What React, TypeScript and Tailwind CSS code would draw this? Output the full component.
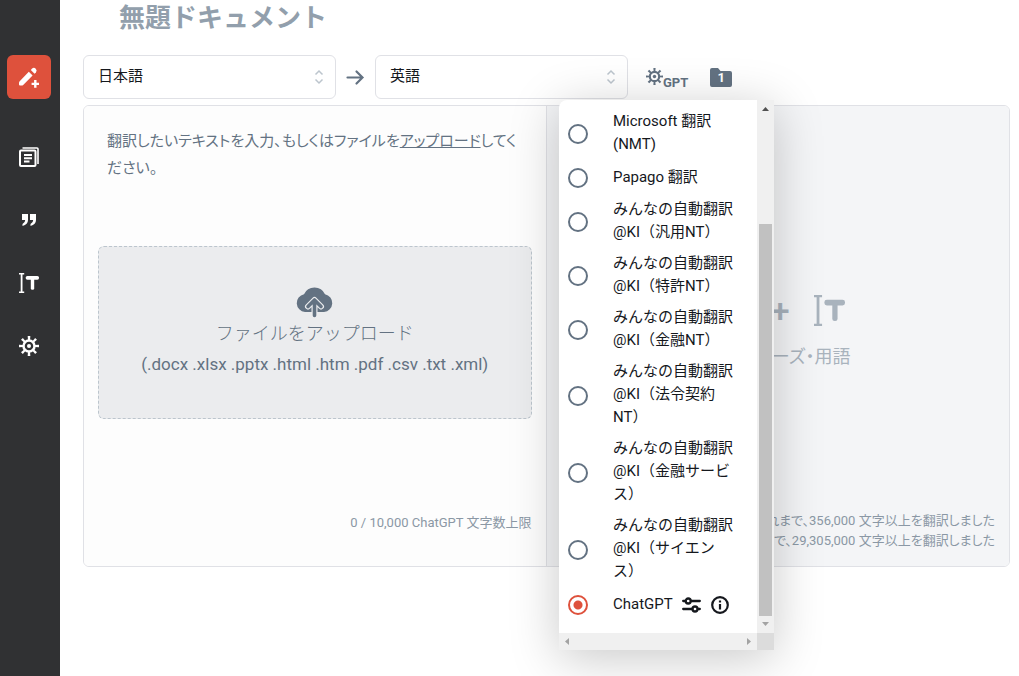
import React, { useState } from 'react';

const engines = [
  { id: 'microsoft', label: 'Microsoft 翻訳\n(NMT)' },
  { id: 'papago', label: 'Papago 翻訳' },
  { id: 'ki-general', label: 'みんなの自動翻訳\n@KI（汎用NT）' },
  { id: 'ki-patent', label: 'みんなの自動翻訳\n@KI（特許NT）' },
  { id: 'ki-finance', label: 'みんなの自動翻訳\n@KI（金融NT）' },
  { id: 'ki-law', label: 'みんなの自動翻訳\n@KI（法令契約\nNT）' },
  { id: 'ki-finance-service', label: 'みんなの自動翻訳\n@KI（金融サービ\nス）' },
  { id: 'ki-science', label: 'みんなの自動翻訳\n@KI（サイエン\nス）' },
  { id: 'chatgpt', label: 'ChatGPT' },
];

type IconProps = { className?: string };

function PenPlusIcon({ className }: IconProps) {
  return (
    <svg className={className} viewBox="0 0 20 20" fill="currentColor" aria-hidden="true">
      <path d="M9.800 4.800 13.600 8.600 4.200 18Q3.500 18.600 2.600 18.600H1Q0 18.600 0 17.600V16Q0 15 .7 14.300Z" />
      <path d="M11.800 3 12.900 1.700Q14.900 0 16.700 1.700 18.500 3.600 16.900 5.400L15.600 6.700Z" />
      <path d="M15.100 13h2.400v2.700H20v2.400h-2.500v2.700h-2.400v-2.700h-2.500v-2.400h2.500z" />
    </svg>
  );
}

function DocsIcon({ className }: IconProps) {
  return (
    <svg className={className} viewBox="0 0 20 20" fill="none" stroke="currentColor" strokeWidth="2" aria-hidden="true">
      <rect x="1" y="3.5" width="15.5" height="15.5" rx="1" />
      <path d="M3.5 1H18q1 0 1 1v15" strokeWidth="1.6" />
      <path d="M5 8h8M5 11.2h8M5 14.4h5.5" />
    </svg>
  );
}

function QuoteIcon({ className }: IconProps) {
  return (
    <svg className={className} viewBox="0 0 20 20" fill="currentColor" aria-hidden="true">
      <path d="M3 4h6v6q0 4.500-5.500 6v-2q2.700-1.200 2.700-4H3z" />
      <path d="M11 4h6v6q0 4.500-5.500 6v-2q2.700-1.200 2.700-4H11z" />
    </svg>
  );
}

function TermIcon({ className }: IconProps) {
  return (
    <svg className={className} viewBox="0 0 20 20" fill="currentColor" aria-hidden="true">
      <path d="M0 0h5.200v1.500H3.500v17h1.700V20H0v-1.500h1.700v-17H0z" />
      <rect x="6.700" y="3" width="13.300" height="3.700" rx="1.600" />
      <rect x="11.800" y="4" width="3.400" height="12.800" rx="1.500" />
    </svg>
  );
}

function GearIcon({ className }: IconProps) {
  const angles = [0, 45, 90, 135, 180, 225, 270, 315];
  return (
    <svg className={className} viewBox="0 0 20 20" fill="currentColor" aria-hidden="true">
      <circle cx="10" cy="10" r="5.500" fill="none" stroke="currentColor" strokeWidth="2.500" />
      <circle cx="10" cy="10" r="2" />
      {angles.map((a) => (
        <path key={a} d="M9 4.500 8.700 0h2.600L11 4.500z" transform={`rotate(${a} 10 10)`} />
      ))}
    </svg>
  );
}

function CloudIcon({ className }: IconProps) {
  return (
    <svg className={className} viewBox="0 0 37 32" aria-hidden="true">
      <path
        d="M9 26A9 9 0 0 1 8 8.200 11.500 11.500 0 0 1 29 8.200 9 9 0 0 1 28 26z"
        fill="#637282"
      />
      <path d="M18.500 29V15M12 20.500l6.500-6.500 6.500 6.500" fill="none" stroke="#ebecee" strokeWidth="6" strokeLinecap="round" strokeLinejoin="round" />
      <path d="M18.500 29.500V15M12 20.500l6.500-6.500 6.500 6.500" fill="none" stroke="#637282" strokeWidth="3.600" strokeLinecap="round" strokeLinejoin="round" />
    </svg>
  );
}

function LanguageSelect({ label, value }: { label: string; value: string }) {
  return (
    <div className="relative w-[253px]">
      <select
        aria-label={label}
        defaultValue={value}
        className="h-11 w-full appearance-none rounded-md border border-[#e0e1e6] bg-white px-[14px] pb-[2px] text-[15px] text-[#15181d] outline-none"
      >
        <option>日本語</option>
        <option>英語</option>
      </select>
      <svg className="pointer-events-none absolute right-3 top-[14px] h-4 w-[10px]" viewBox="0 0 10 16" fill="none" stroke="#bcc5cd" strokeWidth="1.500" aria-hidden="true">
        <path d="M1.500 5.500 5 2l3.500 3.500M1.500 10.500 5 14l3.500-3.500" />
      </svg>
    </div>
  );
}

function Sidebar() {
  const button = 'flex h-11 w-11 items-center justify-center rounded-md';
  return (
    <nav className="flex w-[60px] shrink-0 flex-col items-center gap-[19px] bg-[#303133] pr-[2px] pt-[55px] text-white">
      <button className={`${button} mb-[17px] bg-[#de513c]`} aria-label="新規翻訳">
        <PenPlusIcon className="h-5 w-5 overflow-visible" />
      </button>
      <button className={button} aria-label="ドキュメント">
        <DocsIcon className="h-5 w-5" />
      </button>
      <button className={button} aria-label="フレーズ">
        <QuoteIcon className="h-5 w-5" />
      </button>
      <button className={button} aria-label="用語">
        <TermIcon className="h-5 w-5" />
      </button>
      <button className={button} aria-label="設定">
        <GearIcon className="h-5 w-5" />
      </button>
    </nav>
  );
}

function EngineMenu() {
  const [selected, setSelected] = useState('chatgpt');

  return (
    <div className="absolute -left-[87px] top-[45px] z-10 grid w-[215px] grid-cols-[1fr_17px] overflow-hidden rounded-tl-lg bg-white shadow-[0_8px_50px_rgba(0,0,0,0.22)]">
      <div className="h-[533px] overflow-hidden pt-[6px]">
        {engines.map((engine) => (
          <div key={engine.id} className="flex min-h-[34px] items-center gap-[25px] py-1 pl-[9px]">
            <input
              type="radio"
              name="engine"
              id={engine.id}
              checked={selected === engine.id}
              onChange={() => setSelected(engine.id)}
              className="mt-[2px] h-5 w-5 shrink-0 appearance-none rounded-full border-2 border-[#637282] bg-white checked:border-[#de513c] checked:bg-[radial-gradient(circle,#de513c_4px,transparent_5px)]"
            />
            <label htmlFor={engine.id} className="whitespace-pre text-[15px] leading-[23px] text-[#15181d]">
              {engine.label}
            </label>
            {engine.id === 'chatgpt' && (
              <span className="-ml-4 mt-[2px] flex gap-[10px] text-[#15181d]">
                <button aria-label="詳細設定">
                  <svg className="h-[18px] w-[19px]" viewBox="0 0 19 18" fill="none" stroke="currentColor" strokeWidth="2.300" strokeLinecap="round" aria-hidden="true">
                    <path d="M1.200 5h2.300M9 5h8.800M1.200 13h9M16 13h1.800" />
                    <circle cx="6.200" cy="5" r="2.500" />
                    <circle cx="13" cy="13" r="2.500" />
                  </svg>
                </button>
                <button aria-label="情報">
                  <svg className="h-[18px] w-[18px]" viewBox="0 0 18 18" fill="none" stroke="currentColor" strokeWidth="2.200" aria-hidden="true">
                    <circle cx="9" cy="9" r="7.800" />
                    <path d="M9 8v5.500M9 4.500v2" />
                  </svg>
                </button>
              </span>
            )}
          </div>
        ))}
      </div>

      {/* scroll bars */}
      <div className="flex flex-col items-center bg-[#f0f0f0]" aria-hidden="true">
        <svg className="h-[17px] w-[17px]" viewBox="0 0 17 17" fill="#505050">
          <path d="M5 11h7L8.500 7z" />
        </svg>
        <div className="mt-auto h-[392px] w-[13px] bg-[#c1c1c1]" />
        <svg className="h-[17px] w-[17px]" viewBox="0 0 17 17" fill="#a3a3a3">
          <path d="M5 6h7l-3.500 4z" />
        </svg>
      </div>
      <div className="flex h-[17px] justify-between bg-[#f0f0f0]" aria-hidden="true">
        <svg className="h-[17px] w-[17px]" viewBox="0 0 17 17" fill="#a3a3a3">
          <path d="M10 5v7L6 8.500z" />
        </svg>
        <svg className="h-[17px] w-[17px]" viewBox="0 0 17 17" fill="#a3a3a3">
          <path d="M7 5v7l4-3.500z" />
        </svg>
      </div>
      <div className="bg-[#dcdcdc]" />
    </div>
  );
}

export default function App() {
  return (
    <div className="flex min-h-screen bg-white font-['Roboto','Noto_Sans_CJK_JP',sans-serif]">
      <Sidebar />

      <main className="flex min-w-0 flex-1 flex-col pl-[23px] pr-[9px]">
        <h1 className="h-[55px] pl-9 text-[26px] font-bold leading-9 text-[#929fac]">無題ドキュメント</h1>

        <div className="flex items-center">
          <LanguageSelect label="翻訳元の言語" value="日本語" />
          <svg className="mx-[10px] h-[19px] w-[19px]" viewBox="0 0 19 19" fill="none" stroke="#637282" strokeWidth="2.200" strokeLinecap="round" aria-hidden="true">
            <path d="M1.500 9.500h15M10.500 3.500l6 6-6 6" />
          </svg>
          <LanguageSelect label="翻訳先の言語" value="英語" />

          <div className="relative ml-[18px] h-11">
            <button className="flex h-11 items-center text-[#637282]" aria-label="翻訳エンジン GPT">
              <GearIcon className="mb-[2px] h-[17px] w-[17px]" />
              <span className="pt-[11px] text-[13px] font-bold">GPT</span>
            </button>
            <EngineMenu />
          </div>

          <button className="ml-[22px] grid place-items-center text-white" aria-label="フォルダー 1">
            <svg className="col-start-1 row-start-1 h-[19px] w-[22px]" viewBox="0 0 22 19" fill="#637282" aria-hidden="true">
              <path d="M2 0h6l2.500 3H20q2 0 2 2v12q0 2-2 2H2q-2 0-2-2V2q0-2 2-2z" />
            </svg>
            <span className="col-start-1 row-start-1 pt-[2px] text-[13px] font-bold">1</span>
          </button>
        </div>

        <div className="mt-[6px] grid grid-cols-2 overflow-hidden rounded-md border border-[#e0e1e6]">
          <section className="flex min-h-[460px] flex-col border-r border-[#e0e1e6] bg-[#fdfdfd] px-[14px] pt-[22px]">
            <label htmlFor="source" className="block pl-[9px] text-[15px] leading-[27px] text-[#637282] [font-feature-settings:'palt']">
              翻訳したいテキストを入力、もしくはファイルを<a href="#upload" className="underline">アップロード</a>してく
              <br />
              ださい。
            </label>
            <textarea id="source" className="h-16 resize-none bg-transparent px-[9px] outline-none" />

            <button
              id="upload"
              className="flex h-[173px] flex-col items-center rounded-md border border-dashed border-[#bcc5cd] bg-[#ebecee] pt-[39px] text-[#637282]"
            >
              <CloudIcon className="h-8 w-[37px]" />
              <span className="text-[18px] font-light leading-[31px]">ファイルをアップロード</span>
              <span className="text-[17px] leading-[31px]">(.docx .xlsx .pptx .html .htm .pdf .csv .txt .xml)</span>
            </button>

            <p className="mt-auto pb-[33px] text-right text-[13px] leading-5 text-[#8b98a5]">0 / 10,000 ChatGPT 文字数上限</p>
          </section>

          <section className="flex flex-col bg-[#f4f5f7] px-[14px] pt-[189px] text-[#a9b3bd]">
            <div className="flex h-[30px] items-center justify-center gap-6">
              <QuoteIcon className="h-9 w-9" />
              <span className="text-[34px] font-medium leading-[30px]">+</span>
              <TermIcon className="h-[31px] w-[31px]" />
            </div>
            <p className="mt-[18px] text-center text-[18px] leading-7 [font-feature-settings:'palt']">対訳フレーズ・用語</p>
            <div className="mt-auto pb-[15px] text-right text-[13px] leading-5 text-[#8b98a5] [font-feature-settings:'palt']">
              <p>これまで、356,000 文字以上を翻訳しました</p>
              <p>これまで、29,305,000 文字以上を翻訳しました</p>
            </div>
          </section>
        </div>
      </main>
    </div>
  );
}
